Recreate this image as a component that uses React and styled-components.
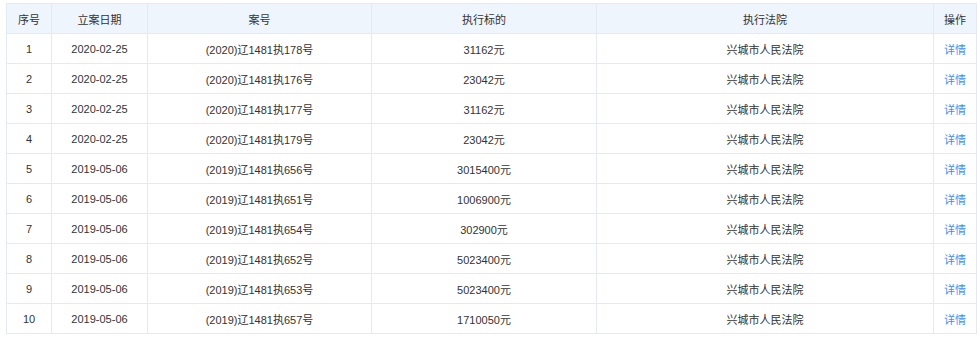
import React from "react";
import styled, { createGlobalStyle } from "styled-components";

const GlobalStyle = createGlobalStyle`
  body {
    margin: 0;
    background: #fff;
    font-family: "Liberation Sans", Arial, "Noto Sans CJK SC", sans-serif;
  }
`;

const cases = [
  { date: "2020-02-25", no: "(2020)辽1481执178号", amount: "31162元" },
  { date: "2020-02-25", no: "(2020)辽1481执176号", amount: "23042元" },
  { date: "2020-02-25", no: "(2020)辽1481执177号", amount: "31162元" },
  { date: "2020-02-25", no: "(2020)辽1481执179号", amount: "23042元" },
  { date: "2019-05-06", no: "(2019)辽1481执656号", amount: "3015400元" },
  { date: "2019-05-06", no: "(2019)辽1481执651号", amount: "1006900元" },
  { date: "2019-05-06", no: "(2019)辽1481执654号", amount: "302900元" },
  { date: "2019-05-06", no: "(2019)辽1481执652号", amount: "5023400元" },
  { date: "2019-05-06", no: "(2019)辽1481执653号", amount: "5023400元" },
  { date: "2019-05-06", no: "(2019)辽1481执657号", amount: "1710050元" },
];

const columns = [
  { title: "序号", width: 45 },
  { title: "立案日期", width: 96 },
  { title: "案号", width: 224 },
  { title: "执行标的", width: 225 },
  { title: "执行法院", width: 337 },
  { title: "操作", width: 43 },
];

const Wrap = styled.div`
  padding: 3px 0 0 6px;
`;

const Table = styled.table`
  border-collapse: collapse;
  table-layout: fixed;
  width: 971px;
  font-size: 11px;
  color: #333;
`;

const Th = styled.th`
  height: 29px;
  padding: 0;
  font-weight: normal;
  background: #eef5fc;
  border: 1px solid #e3eaf2;
  text-align: center;
  color: #333;
`;

const Td = styled.td`
  height: 29px;
  padding: 0;
  border: 1px solid #e3eaf2;
  text-align: center;
  white-space: nowrap;
`;

const Link = styled.a`
  color: #3e8ef7;
  font-size: 11px;
  text-decoration: none;
  cursor: pointer;
`;

export default function App() {
  return (
    <Wrap>
      <GlobalStyle />
      <Table>
        <colgroup>
          {columns.map((c) => (
            <col key={c.title} style={{ width: c.width }} />
          ))}
        </colgroup>
        <thead>
          <tr>
            {columns.map((c) => (
              <Th key={c.title}>{c.title}</Th>
            ))}
          </tr>
        </thead>
        <tbody>
          {cases.map((c, i) => (
            <tr key={c.no}>
              <Td>{i + 1}</Td>
              <Td>{c.date}</Td>
              <Td>{c.no}</Td>
              <Td>{c.amount}</Td>
              <Td>兴城市人民法院</Td>
              <Td>
                <Link>详情</Link>
              </Td>
            </tr>
          ))}
        </tbody>
      </Table>
    </Wrap>
  );
}
